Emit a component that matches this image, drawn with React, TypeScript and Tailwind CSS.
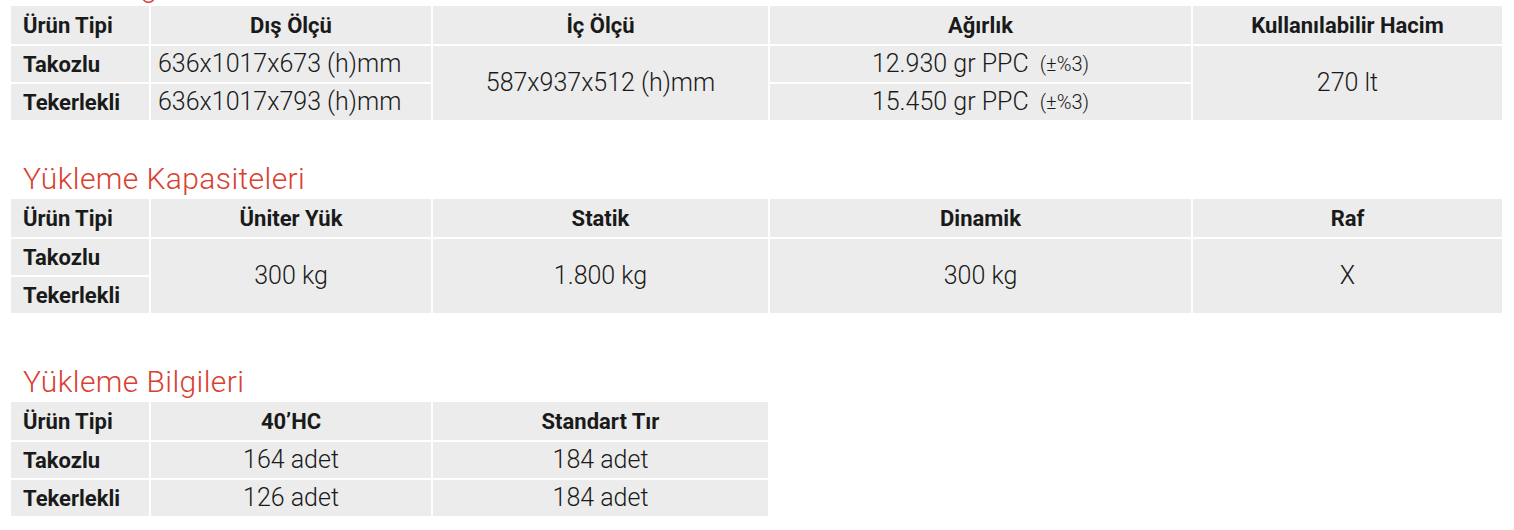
import React from "react";

const F = { fontFamily: "Roboto, 'Liberation Sans', sans-serif" };

function Title({ text, className = "" }: { text: string; className?: string }) {
  return (
    <div
      className={`pl-[12px] text-[30px] leading-[34px] font-light tracking-[0.4px] text-[#d9412f] whitespace-nowrap ${className}`}
    >
      {text}
    </div>
  );
}

const cell = "bg-[#ececec] flex items-center";
const head = `${cell} justify-center text-[22px] font-bold text-[#1a1a1a]`;
const headL = `${cell} pl-[12px] text-[22px] font-bold text-[#1a1a1a]`;
const label = `${cell} pl-[12px] text-[22px] font-bold text-[#1a1a1a]`;
const val = `${cell} justify-center text-[25px] font-light text-[#1a1a1a] whitespace-nowrap`;
const valL = `${cell} pl-[7px] text-[25px] font-light text-[#1a1a1a] whitespace-nowrap`;

function Weight({ v }: { v: string }) {
  return (
    <div className={val}>
      <span>{v} gr PPC</span>
      <span className="ml-[11px] text-[20px] font-light">(±%3)</span>
    </div>
  );
}

export default function App() {
  return (
    <div className="bg-white w-[1514px] h-[530px] overflow-hidden" style={F}>
      <div className="flex flex-col px-[11px]">
        <Title text="Genel Bilgiler" className="-mt-[30px] mb-[2px]" />
        <div className="grid grid-cols-[138px_280px_335px_421px_309px] grid-rows-[38px_36px_36px] gap-[2px] w-[1491px]">
          <div className={headL}>Ürün Tipi</div>
          <div className={head}>Dış Ölçü</div>
          <div className={head}>İç Ölçü</div>
          <div className={head}>Ağırlık</div>
          <div className={head}>Kullanılabilir Hacim</div>

          <div className={label}>Takozlu</div>
          <div className={valL}>636x1017x673 (h)mm</div>
          <div className={`${val} row-span-2`}>587x937x512 (h)mm</div>
          <Weight v="12.930" />
          <div className={`${val} row-span-2`}>270 lt</div>

          <div className={label}>Tekerlekli</div>
          <div className={valL}>636x1017x793 (h)mm</div>
          <Weight v="15.450" />
        </div>

        <Title text="Yükleme Kapasiteleri" className="mt-[42px] mb-[3px]" />
        <div className="grid grid-cols-[138px_280px_335px_421px_309px] grid-rows-[38px_36px_36px] gap-[2px] w-[1491px]">
          <div className={headL}>Ürün Tipi</div>
          <div className={head}>Üniter Yük</div>
          <div className={head}>Statik</div>
          <div className={head}>Dinamik</div>
          <div className={head}>Raf</div>

          <div className={label}>Takozlu</div>
          <div className={`${val} row-span-2`}>300 kg</div>
          <div className={`${val} row-span-2`}>1.800 kg</div>
          <div className={`${val} row-span-2`}>300 kg</div>
          <div className={`${val} row-span-2`}>X</div>

          <div className={label}>Tekerlekli</div>
        </div>

        <Title text="Yükleme Bilgileri" className="mt-[52px] mb-[3px]" />
        <div className="grid grid-cols-[138px_280px_335px] grid-rows-[38px_36px_36px] gap-[2px] w-[757px]">
          <div className={headL}>Ürün Tipi</div>
          <div className={head}>40’HC</div>
          <div className={head}>Standart Tır</div>

          <div className={label}>Takozlu</div>
          <div className={val}>164 adet</div>
          <div className={val}>184 adet</div>

          <div className={label}>Tekerlekli</div>
          <div className={val}>126 adet</div>
          <div className={val}>184 adet</div>
        </div>
      </div>
    </div>
  );
}
